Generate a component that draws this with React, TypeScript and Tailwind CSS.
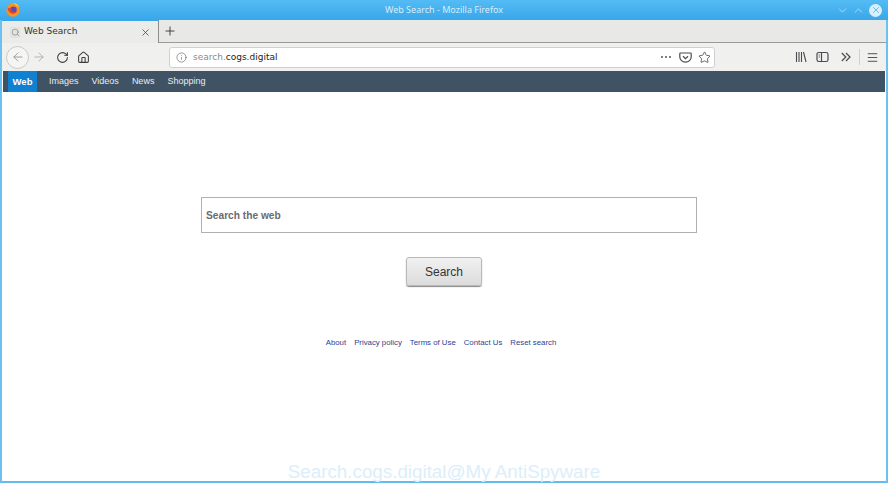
import { X, Plus, ArrowLeft, ArrowRight, RotateCw, Home, Info, Star, Search, ChevronDown, ChevronUp, Menu } from "lucide-react";

const navItems = ["Images", "Videos", "News", "Shopping"];
const footerLinks = ["About", "Privacy policy", "Terms of Use", "Contact Us", "Reset search"];

function FirefoxLogo() {
  return (
    <svg width="14" height="14" viewBox="0 0 14 14">
      <circle cx="7" cy="7" r="6.7" fill="#f7931e" />
      <path d="M7 .3a6.700 6.700 0 0 1 6.500 5.200c-.7-1.500-1.900-2.500-3.100-2.900C9.500 1.600 8.300.8 7 .3z" fill="#ffd23c" />
      <circle cx="7.400" cy="6.800" r="3.300" fill="#5d4bb5" />
      <path d="M1.600 4.200c0 3.400 2.200 6.600 5.600 6.600 2 0 3.500-1.100 4-2.700-.8 1-2 1.400-3.200 1.200C6.200 9 4.800 7.600 5.200 5.500 4 5.700 2.700 5.200 1.600 4.200z" fill="#e8442c" />
    </svg>
  );
}

function PocketIcon() {
  return (
    <svg width="13" height="13" viewBox="0 0 13 13" fill="none" stroke="#4a4a4f" strokeWidth="1.2">
      <path d="M1.500 2h10a.7.7 0 0 1 .7.7V6a5.700 5.200 0 0 1-11.400 0V2.700A.7.7 0 0 1 1.500 2z" />
      <path d="M4 5.200l2.500 2.400L9 5.200" />
    </svg>
  );
}

function LibraryIcon() {
  return (
    <svg width="12" height="12" viewBox="0 0 12 12" fill="none" stroke="#4a4a4f" strokeWidth="1.1">
      <path d="M1.500 1v10M4 1v10M6.500 1v10M8.500 1l2.500 10" />
    </svg>
  );
}

function SidebarIcon() {
  return (
    <svg width="13" height="12" viewBox="0 0 13 12" fill="none" stroke="#4a4a4f" strokeWidth="1.2">
      <rect x="1" y="1.500" width="11" height="9" rx="1.800" />
      <path d="M5.500 1.500v9" />
      <path d="M2.800 4h1M2.800 6h1" />
    </svg>
  );
}

function OverflowIcon() {
  return (
    <svg width="10" height="10" viewBox="0 0 10 10" fill="none" stroke="#4a4a4f" strokeWidth="1.2">
      <path d="M.8 1l4 4-4 4M5 1l4 4-4 4" />
    </svg>
  );
}

export default function App() {
  return (
    <div className="flex h-[483px] w-[888px] flex-col overflow-hidden bg-white font-['Liberation_Sans',sans-serif]">
      {/* title bar */}
      <div className="flex h-5 items-center bg-gradient-to-b from-[#53bcf5] to-[#3aa6e9] pl-[6px] pr-[6px]">
        <div className="w-[48px]">
          <FirefoxLogo />
        </div>
        <div className="flex-1 text-center font-['Noto_Sans',sans-serif] text-[9px] text-[#d5edfc]">
          Web Search - Mozilla Firefox
        </div>
        <div className="flex w-[48px] items-center justify-end gap-[3px]">
          <ChevronDown size={13} strokeWidth={1.5} className="text-[#b8e4fc]" />
          <ChevronUp size={13} strokeWidth={1.5} className="text-[#b8e4fc]" />
          <span className="ml-[1px] flex h-[13px] w-[13px] items-center justify-center rounded-full bg-[#d9effc]">
            <X size={10} strokeWidth={2} className="text-[#53b0ea]" />
          </span>
        </div>
      </div>

      <div className="flex min-h-0 flex-1 flex-col border-x-2 border-b-2 border-x-[#6cc0f0] border-b-[#62bcf0]">
        {/* tab strip */}
        <div className="flex h-[23px] bg-[#e8e8e6]">
          <div className="flex w-[157px] items-center border-t border-r border-[#8d8d8d] border-t-[#3aa6e9] bg-[#ebebe9] pl-[8px] pr-[7px]">
            <span className="flex h-[11px] w-[10px] items-center justify-center rounded-[1px] bg-[#e2e2e0]">
              <Search size={9} strokeWidth={1.5} className="text-[#77777a]" />
            </span>
            <span className="ml-[4px] flex-1 font-['DejaVu_Sans',sans-serif] text-[9px] text-[#333]">Web Search</span>
            <X size={11} strokeWidth={1.6} className="text-[#3c3c3e]" />
          </div>
          <div className="flex w-[25px] items-center justify-center border-b border-[#9a9a9a] pr-[3px]">
            <Plus size={14} strokeWidth={1.6} className="text-[#38383b]" />
          </div>
          <div className="flex-1 border-b border-[#9a9a9a]" />
        </div>

        {/* toolbar */}
        <div className="flex h-[28px] items-center bg-[#f0f0ef] pl-[4px] pr-[7px]">
          <span className="flex h-[23px] w-[23px] items-center justify-center rounded-full border border-[#c9c9c9] bg-[#f5f5f4]">
            <ArrowLeft size={14} strokeWidth={1.4} className="text-[#8f8f92]" />
          </span>
          <ArrowRight size={14} strokeWidth={1.4} className="ml-[3px] text-[#a8a8aa]" />
          <RotateCw size={13} strokeWidth={1.9} className="ml-[10px] text-[#3c3c3f]" />
          <Home size={13} strokeWidth={1.9} className="ml-[8px] text-[#3c3c3f]" />
          <div className="ml-[79px] flex h-[21px] w-[546px] items-center rounded-[3px] border border-[#d0d0d0] bg-white pl-[6px] pr-[3px]">
            <Info size={11} strokeWidth={1.3} className="text-[#55555a]" />
            <span className="ml-[6px] flex-1 pt-[1px] font-['DejaVu_Sans',sans-serif] text-[9px] text-[#8a8a8a]">
              search.<span className="text-[#222]">cogs.digital</span>
            </span>
            <span className="flex gap-[2px]">
              <span className="h-[2px] w-[2px] rounded-full bg-[#55555a]" />
              <span className="h-[2px] w-[2px] rounded-full bg-[#55555a]" />
              <span className="h-[2px] w-[2px] rounded-full bg-[#55555a]" />
            </span>
            <span className="ml-[8px]"><PocketIcon /></span>
            <Star size={13} strokeWidth={1.4} className="ml-[6px] text-[#3c3c3f]" />
          </div>
          <div className="flex flex-1 items-center justify-end">
            <LibraryIcon />
            <span className="ml-[9px]"><SidebarIcon /></span>
            <span className="ml-[12px]"><OverflowIcon /></span>
            <span className="ml-[8px] h-[16px] w-px bg-[#d0d0d0]" />
            <Menu size={13} strokeWidth={1.6} className="ml-[6px] text-[#3c3c3f]" />
          </div>
        </div>

        {/* site nav */}
        <div className="ml-[1px] mr-[1px] flex h-[21px] items-stretch bg-[#3f5364] pl-[5px] text-[9px] text-[#e8edf0]">
          <div className="flex w-[29px] items-center justify-center bg-[#0f81d0] pt-[1px] text-[9.500px] font-bold text-white">Web</div>
          <div className="ml-[12px] flex items-center gap-[13px] pt-[1px]">
            {navItems.map((item) => (
              <span key={item}>{item}</span>
            ))}
          </div>
        </div>

        {/* page */}
        <div className="flex min-h-0 flex-1 flex-col items-center pt-[105px]">
          <div className="ml-[10px] flex h-[36px] w-[496px] items-center border border-[#b0b0b0] pl-[4px] pt-[1px] text-[10.200px] font-bold text-[#6b6b6b]">
            Search the web
          </div>
          <button className="mt-[24px] h-[29px] w-[76px] rounded-[3px] border border-[#b8b8b8] bg-gradient-to-b from-[#f1f1f1] to-[#dcdcdc] text-[12px] text-[#333] shadow-[0_1px_1px_#888]">
            Search
          </button>
          <div className="mr-[6px] mt-[51px] flex h-[12px] items-center gap-[8px] text-[7.800px] text-[#2b4490]">
            {footerLinks.map((link) => (
              <span key={link}>{link}</span>
            ))}
          </div>
          <div className="mt-auto text-[18.800px] leading-[18px] text-[#dceefa]">Search.cogs.digital@My AntiSpyware</div>
        </div>
      </div>
    </div>
  );
}
